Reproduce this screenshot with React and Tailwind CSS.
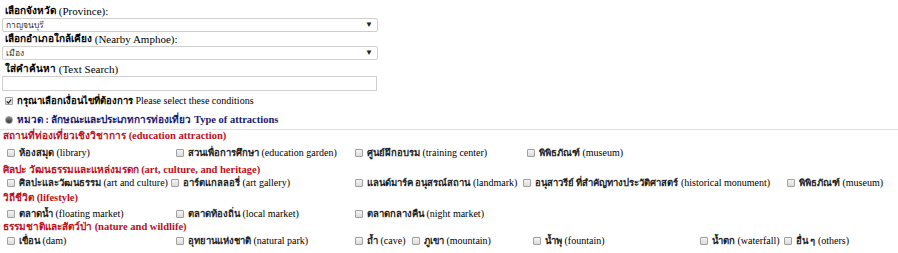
import React from "react";

const Box = ({ checked }) => (
  <span className="inline-flex w-[8px] h-[8px] shrink-0 items-center justify-center border border-[#a0a0a0] rounded-[1px] bg-gradient-to-b from-[#f4f4f4] to-[#dcdcdc]">
    {checked ? (
      <svg width="7" height="7" viewBox="0 0 7 7">
        <path d="M1 3.5 L2.8 5.3 L6 1.2" stroke="#222" strokeWidth="1.4" fill="none" />
      </svg>
    ) : null}
  </span>
);

const Item = ({ w, th, en }) => (
  <div className={`flex items-center gap-[4px] whitespace-nowrap shrink-0 ${w}`}>
    <Box />
    <span>
      <span className="font-bold text-[#222] text-[9.5px]">{th}</span>{" "}
      <span>{en}</span>
    </span>
  </div>
);

const Heading = ({ th, en, h }) => (
  <div className={`flex items-center pl-[3px] text-[10.5px] leading-[12px] font-bold text-[#c0101a] whitespace-nowrap ${h}`}>
    <span className="text-[10px] font-bold">{th}</span>&nbsp;{en}
  </div>
);

const Select = ({ value }) => (
  <div className="ml-[2px] w-[376px] h-[14px] border border-[#cfcfcf] rounded-[2px] flex items-center justify-between pl-[3px] pr-[4px] text-[8.5px] leading-none bg-white">
    <span className="text-[#333]">{value}</span>
    <span className="text-[8px] text-[#222]">▼</span>
  </div>
);

const Row = ({ h, children }) => (
  <div className={`flex items-center pl-[7px] text-[10px] leading-[12px] ${h}`}>{children}</div>
);

export default function App() {
  return (
    <div className="w-[898px] h-[253px] bg-white overflow-hidden text-black font-['Liberation_Serif','Noto_Sans',serif] text-[11px] leading-[12px]">
      <div className="pt-[4px] pl-[5px] h-[18px] text-[11px] flex items-center">
        <span className="font-bold text-[10px]">เลือกจังหวัด</span>&nbsp;(Province):
      </div>
      <Select value="กาญจนบุรี" />
      <div className="pl-[5px] h-[14px] text-[11px] flex items-center">
        <span className="font-bold text-[10px]">เลือกอำเภอใกล้เคียง</span>&nbsp;(Nearby Amphoe):
      </div>
      <Select value="เมือง" />
      <div className="pl-[5px] h-[14px] mt-[2px] text-[11px] flex items-center">
        <span className="font-bold text-[10px]">ใส่คำค้นหา</span>&nbsp;(Text Search)
      </div>
      <div className="ml-[2px] w-[375px] h-[15px] border border-[#cfcfcf] bg-white"></div>
      <div className="pl-[5px] h-[20px] flex items-center gap-[4px] text-[10px]">
        <Box checked />
        <span>
          <span className="font-bold text-[9.5px]">กรุณาเลือกเงื่อนไขที่ต้องการ</span> Please select these conditions
        </span>
      </div>
      <div className="pl-[5px] h-[17px] flex items-center gap-[4px] text-[10.5px] font-bold text-[#1a1a6e]">
        <span className="w-[8px] h-[8px] rounded-full bg-gradient-to-b from-[#888] to-[#333] border border-[#999]"></span>
        <span>
          <span className="text-[10px] font-bold">หมวด : ลักษณะและประเภทการท่องเที่ยว</span> Type of attractions
        </span>
      </div>
      <div className="h-[2px] border-b border-[#e2def4]"></div>
      <Heading h="h-[12px]" th="สถานที่ท่องเที่ยวเชิงวิชาการ" en="(education attraction)" />
      <Row h="h-[22px]">
        <Item w="w-[169px]" th="ห้องสมุด" en="(library)" />
        <Item w="w-[179px]" th="สวนเพื่อการศึกษา" en="(education garden)" />
        <Item w="w-[172px]" th="ศูนย์ฝึกอบรม" en="(training center)" />
        <Item w="w-[120px]" th="พิพิธภัณฑ์" en="(museum)" />
      </Row>
      <Heading h="h-[12px]" th="ศิลปะ วัฒนธรรมและแหล่งมรดก" en="(art, culture, and heritage)" />
      <Row h="h-[14px]">
        <Item w="w-[164px]" th="ศิลปะและวัฒนธรรม" en="(art and culture)" />
        <Item w="w-[184px]" th="อาร์ตแกลลอรี่" en="(art gallery)" />
        <Item w="w-[168px]" th="แลนด์มาร์ค อนุสรณ์สถาน" en="(landmark)" />
        <Item w="w-[264px]" th="อนุสาวรีย์ ที่สำคัญทางประวัติศาสตร์" en="(historical monument)" />
        <Item w="w-[100px]" th="พิพิธภัณฑ์" en="(museum)" />
      </Row>
      <Heading h="h-[16px]" th="วิถีชีวิต" en="(lifestyle)" />
      <Row h="h-[16px]">
        <Item w="w-[169px]" th="ตลาดน้ำ" en="(floating market)" />
        <Item w="w-[179px]" th="ตลาดท้องถิ่น" en="(local market)" />
        <Item w="w-[172px]" th="ตลาดกลางคืน" en="(night market)" />
      </Row>
      <Heading h="h-[10px]" th="ธรรมชาติและสัตว์ป่า" en="(nature and wildlife)" />
      <Row h="h-[18px]">
        <Item w="w-[169px]" th="เขื่อน" en="(dam)" />
        <Item w="w-[179px]" th="อุทยานแห่งชาติ" en="(natural park)" />
        <Item w="w-[57px]" th="ถ้ำ" en="(cave)" />
        <Item w="w-[121px]" th="ภูเขา" en="(mountain)" />
        <Item w="w-[167px]" th="น้ำพุ" en="(fountain)" />
        <Item w="w-[84px]" th="น้ำตก" en="(waterfall)" />
        <Item w="w-[80px]" th="อื่น ๆ" en="(others)" />
      </Row>
    </div>
  );
}
